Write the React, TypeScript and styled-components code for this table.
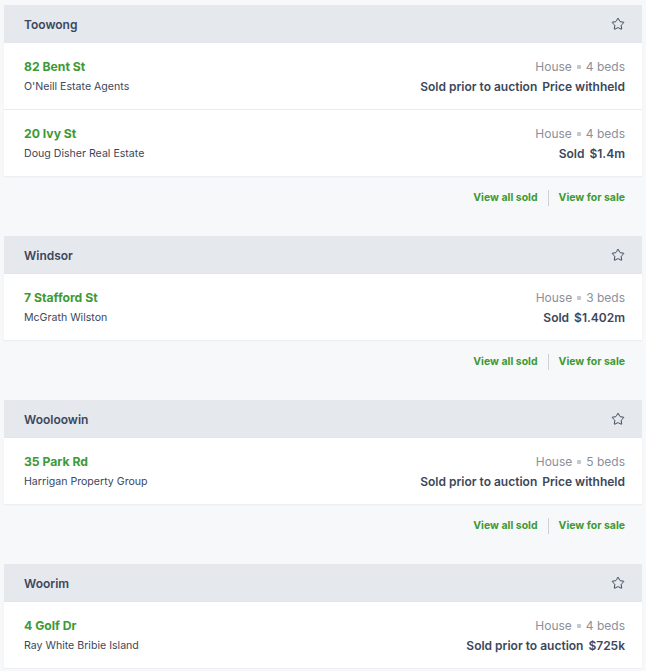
import styled, { createGlobalStyle } from "styled-components";
import { Star } from "lucide-react";

const GlobalStyle = createGlobalStyle`
  body {
    margin: 0;
    background-color: #f7f8fa;
    font-family: Inter, "Noto Sans", "Liberation Sans", sans-serif;
    color: #3c475b;
  }
`;

const StyledPage = styled.div`
  padding: 5px 4px 0 4px;
  display: flex;
  flex-direction: column;
  gap: 18px;
`;

const StyledSection = styled.section`
  display: flex;
  flex-direction: column;
`;

const StyledHeader = styled.div`
  height: 38px;
  background-color: #e5e8ec;
  display: flex;
  align-items: center;
  justify-content: space-between;
  padding: 0 17px 0 20px;
  font-size: 12px;
  font-weight: 600;
  color: #3c475b;
`;

const StyledRow = styled.div`
  background-color: #fff;
  display: flex;
  justify-content: space-between;
  padding: 14px 17px 12px 20px;
  border-bottom: 1px solid #eceef1;
  box-shadow: 0 0 2px rgba(0, 0, 0, 0.04);
`;

const StyledCol = styled.div<{ $right?: boolean }>`
  display: flex;
  flex-direction: column;
  align-items: ${(p) => (p.$right ? "flex-end" : "flex-start")};
`;

const StyledAddress = styled.a`
  font-size: 12.2px;
  line-height: 20px;
  font-weight: 700;
  color: #3d9a34;
  text-decoration: none;
`;

const StyledAgent = styled.span`
  font-size: 10.6px;
  line-height: 20px;
  color: #3c475b;
`;

const StyledMeta = styled.span`
  font-size: 12px;
  line-height: 20px;
  color: #8b909a;
  display: flex;
  align-items: center;
  gap: 5px;
`;

const StyledDot = styled.span`
  width: 4px;
  height: 4px;
  border-radius: 1px;
  background-color: #c4c8ce;
`;

const StyledPrice = styled.span`
  font-size: 12px;
  line-height: 20px;
  font-weight: 600;
  color: #3c475b;
  display: flex;
  gap: 5px;
`;

const StyledFooter = styled.div`
  height: 41px;
  display: flex;
  align-items: center;
  justify-content: flex-end;
  padding-right: 17px;
  gap: 10px;
`;

const StyledLink = styled.a`
  font-size: 10.5px;
  font-weight: 700;
  color: #3d9a34;
  text-decoration: none;
`;

const StyledDivider = styled.span`
  width: 1px;
  height: 16px;
  background-color: #cdd1d7;
`;

type Listing = {
  address: string;
  agent: string;
  beds: number;
  sale: string;
  price: string;
};

type Suburb = {
  name: string;
  listings: Listing[];
  footer: boolean;
};

const suburbs: Suburb[] = [
  {
    name: "Toowong",
    footer: true,
    listings: [
      {
        address: "82 Bent St",
        agent: "O'Neill Estate Agents",
        beds: 4,
        sale: "Sold prior to auction",
        price: "Price withheld",
      },
      {
        address: "20 Ivy St",
        agent: "Doug Disher Real Estate",
        beds: 4,
        sale: "Sold",
        price: "$1.4m",
      },
    ],
  },
  {
    name: "Windsor",
    footer: true,
    listings: [
      {
        address: "7 Stafford St",
        agent: "McGrath Wilston",
        beds: 3,
        sale: "Sold",
        price: "$1.402m",
      },
    ],
  },
  {
    name: "Wooloowin",
    footer: true,
    listings: [
      {
        address: "35 Park Rd",
        agent: "Harrigan Property Group",
        beds: 5,
        sale: "Sold prior to auction",
        price: "Price withheld",
      },
    ],
  },
  {
    name: "Woorim",
    footer: false,
    listings: [
      {
        address: "4 Golf Dr",
        agent: "Ray White Bribie Island",
        beds: 4,
        sale: "Sold prior to auction",
        price: "$725k",
      },
    ],
  },
];

const App = () => {
  return (
    <StyledPage>
      <GlobalStyle />
      {suburbs.map((s) => (
        <StyledSection key={s.name}>
          <StyledHeader>
            <span>{s.name}</span>
            <Star size={14} strokeWidth={1.7} color="#3c475b" />
          </StyledHeader>
          {s.listings.map((l) => (
            <StyledRow key={l.address}>
              <StyledCol>
                <StyledAddress href="#">{l.address}</StyledAddress>
                <StyledAgent>{l.agent}</StyledAgent>
              </StyledCol>
              <StyledCol $right>
                <StyledMeta>
                  House <StyledDot /> {l.beds} beds
                </StyledMeta>
                <StyledPrice>
                  <span>{l.sale}</span>
                  <span>{l.price}</span>
                </StyledPrice>
              </StyledCol>
            </StyledRow>
          ))}
          {s.footer && (
            <StyledFooter>
              <StyledLink href="#">View all sold</StyledLink>
              <StyledDivider />
              <StyledLink href="#">View for sale</StyledLink>
            </StyledFooter>
          )}
        </StyledSection>
      ))}
    </StyledPage>
  );
};

export default App;
